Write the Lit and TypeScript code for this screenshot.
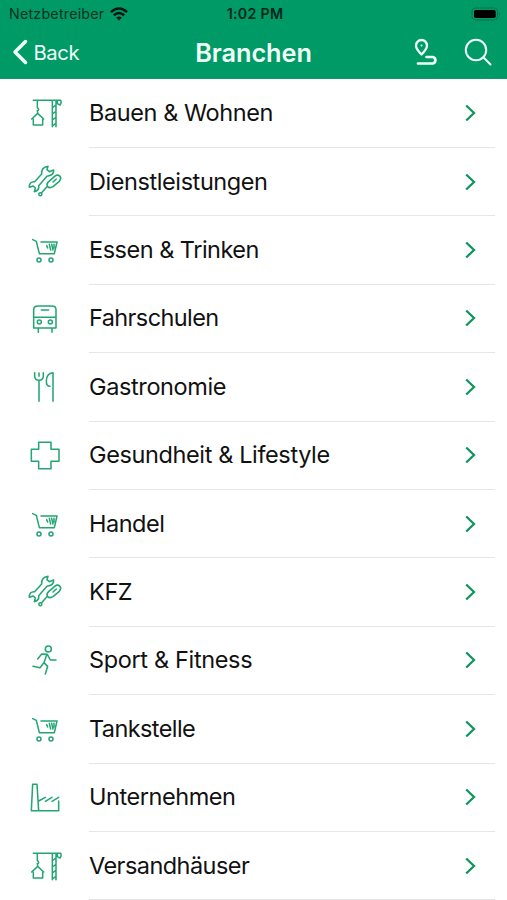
import { LitElement, html, css, svg } from "lit";
import { customElement, property } from "lit/decorators.js";

const glyphs: Record<string, unknown> = {
  crane: svg`<path d="M40 37H122M40 37H65M52 38V59M52 59Q60 65 52 68L53 75M35 93L53 76L71 93M40 94V111H68V94M97 37V116M108 38V116M97 59L108 51M97 78L108 70M97 96L108 88M97 114L108 106M112 39V47L120 51L123 46V38"/>`,
  tools: svg`<path d="M65 51Q63 31 84 28L81 38L88 44L101 39Q102 55 81 58L56 86Q59 100 43 104L46 93L40 87L28 91Q27 73 44 74Z"/><path d="M82 88Q79 80 86 74L104 58Q113 51 120 58Q125 64 118 73L99 89Q89 95 82 88ZM82 88L65 107M99 75L109 66"/><circle cx="61" cy="112" r="4.5"/>`,
  cart: svg`<path d="M38 44L49 49L58 86H103L111 51H63M80 62L83 69M88 58L92 75M95 58L99 75M102 58L102 69"/><circle cx="57" cy="105" r="6"/><circle cx="93" cy="105" r="6"/>`,
  bus: svg`<g transform="translate(0 2)"><path d="M41 103V48Q41 37 54 37H96Q108 37 108 48V103ZM41 71H108M64 49H86M55 104V116M96 104V116"/><circle cx="58" cy="85" r="6"/><circle cx="91" cy="85" r="6"/></g>`,
  cutlery: svg`<path d="M44 32V42Q44 55 57 55Q70 55 70 42V32M57 33V43M57 56V118M99 118V32Q79 34 79 57Q79 73 90 73"/>`,
  health: svg`<path d="M56 37H93V58H117V94H93V116H56V94H34V58H56Z"/>`,
  runner: svg`<g transform="translate(0 2)"><circle cx="85" cy="40" r="9"/><path d="M53 70L65 55L82 56L91 73H108M80 57L72 81L83 92L76 115M71 82L60 96L39 92"/></g>`,
  factory: svg`<path d="M34 116L38 37H51L56 116M34 116H116V87M56 87L76 76M76 88L96 76M96 88L116 76"/>`,
};

/* icon, label, letter spacing in px */
const rows: [string, string, number][] = [
  ["crane", "Bauen & Wohnen", -0.42],
  ["tools", "Dienstleistungen", -0.42],
  ["cart", "Essen & Trinken", -0.5],
  ["bus", "Fahrschulen", -0.6],
  ["cutlery", "Gastronomie", -0.38],
  ["health", "Gesundheit & Lifestyle", -0.38],
  ["cart", "Handel", -0.5],
  ["tools", "KFZ", -0.4],
  ["runner", "Sport & Fitness", -0.35],
  ["cart", "Tankstelle", -0.6],
  ["factory", "Unternehmen", -0.45],
  ["crane", "Versandhäuser", -0.55],
];

@customElement("branch-row")
class BranchRow extends LitElement {
  @property() icon = "";
  @property() label = "";
  @property({ type: Number }) spacing = 0;
  static styles = css`
    :host { display: flex; height: 68.4px; box-sizing: border-box; }
    .icon { width: 60px; height: 50px; margin: 8.7px 9px 0 20px; flex: none;
      fill: none; stroke: #23a574; stroke-width: 4.6; stroke-linejoin: round; stroke-linecap: round; }
    .body { flex: 1; margin-right: 12px; display: flex; align-items: center;
      justify-content: space-between; border-bottom: 1px solid #e6e6e6; }
    .label { font-size: 23.5px; line-height: 30px; color: #111; white-space: nowrap; }
    .chev { width: 12px; height: 18px; margin-right: 18px; fill: none; stroke: #12945f; stroke-width: 2.3; }
  `;
  render() {
    return html`
      <svg class="icon" viewBox="0 0 180 150">${glyphs[this.icon]}</svg>
      <div class="body">
        <span class="label" style="letter-spacing:${this.spacing}px">${this.label}</span>
        <svg class="chev" viewBox="0 0 12 18"><path d="M1.2 1.5L9 9L1.2 16.5"/></svg>
      </div>`;
  }
}

@customElement("app-root")
class AppRoot extends LitElement {
  static styles = css`
    :host { display: block; height: 900px; overflow: hidden; background: #fff;
      font-family: Inter, "Liberation Sans", sans-serif; }
    header { height: 79px; background: #009a66; box-sizing: border-box; border-bottom: 1px solid #149667; }
    main { padding-top: 0.6px; }
    .status { height: 27px; display: grid; grid-template-columns: 1fr auto 1fr; align-items: center;
      font-size: 14.2px; color: #06301f; padding: 0 6px 0 9px; }
    .carrier { display: flex; align-items: center; gap: 6px; letter-spacing: 0.25px; }
    .time { font-weight: 600; color: #03271a; letter-spacing: 0.3px; }
    .wifi { width: 18px; height: 14px; }
    .battery { width: 30px; height: 14px; justify-self: end; }
    .nav { height: 50px; display: grid; grid-template-columns: 1fr auto 1fr; align-items: center;
      color: #effff7; padding: 0 12px; }
    .back { display: flex; align-items: center; gap: 5.5px; font-size: 20.3px; letter-spacing: -0.4px; }
    .back svg { width: 16px; height: 26px; }
    .title { font-size: 25.3px; font-weight: 600; letter-spacing: -0.05px; }
    .actions { display: flex; justify-content: flex-end; gap: 25.5px; align-items: center; margin-right: 3.5px; }
    .actions svg { width: 28px; height: 28px; }
    .actions .route { width: 24px; }
    .line { fill: none; stroke: #effff7; stroke-linecap: round; stroke-linejoin: round; }
  `;
  render() {
    return html`
      <header>
        <div class="status">
          <span class="carrier">Netzbetreiber
            <svg class="wifi" viewBox="0 0 18 14" fill="none" stroke="#06160f" stroke-width="2.5">
              <path d="M.9 5.2Q9-2.2 17.1 5.2M3.8 8.3Q9 3.6 14.2 8.3"/>
              <path d="M9 13.5L6.2 10.7Q9 8.4 11.8 10.7Z" fill="#06160f" stroke="none"/>
            </svg>
          </span>
          <span class="time">1:02 PM</span>
          <svg class="battery" viewBox="0 0 30 14">
            <rect x="1" y="1" width="25.5" height="12" rx="3.5" fill="none" stroke="#077348"/>
            <rect x="3" y="3" width="21.7" height="8" rx="1.8"/>
            <path d="M28 5Q30 7 28 9Z" fill="#077348"/>
          </svg>
        </div>
        <div class="nav">
          <span class="back">
            <svg class="line" viewBox="0 0 16 26" stroke-width="3.5"><path d="M13.5 2.5L3 13L13.5 23.5"/></svg>Back
          </span>
          <span class="title">Branchen</span>
          <span class="actions">
            <svg class="line route" viewBox="0 0 24 28" stroke-width="2.3">
              <path d="M7.5 16.5Q2 11 2 7.5A5.5 5.5 0 0 1 13 7.5Q13 11 7.5 16.5Z"/><circle cx="7.5" cy="7.5" r=".4" stroke-width="1.2"/>
              <path d="M12.5 19H19A3.4 3.4 0 0 1 19 25.5H4" stroke-width="2.7"/>
            </svg>
            <svg class="line" viewBox="0 0 28 28" stroke-width="2"><circle cx="12" cy="12" r="10.2"/><path d="M19.3 19.3L26.5 26.5"/></svg>
          </span>
        </div>
      </header>
      <main>${rows.map(([icon, label, spacing]) => html`<branch-row .icon=${icon} .label=${label} .spacing=${spacing}></branch-row>`)}</main>`;
  }
}
